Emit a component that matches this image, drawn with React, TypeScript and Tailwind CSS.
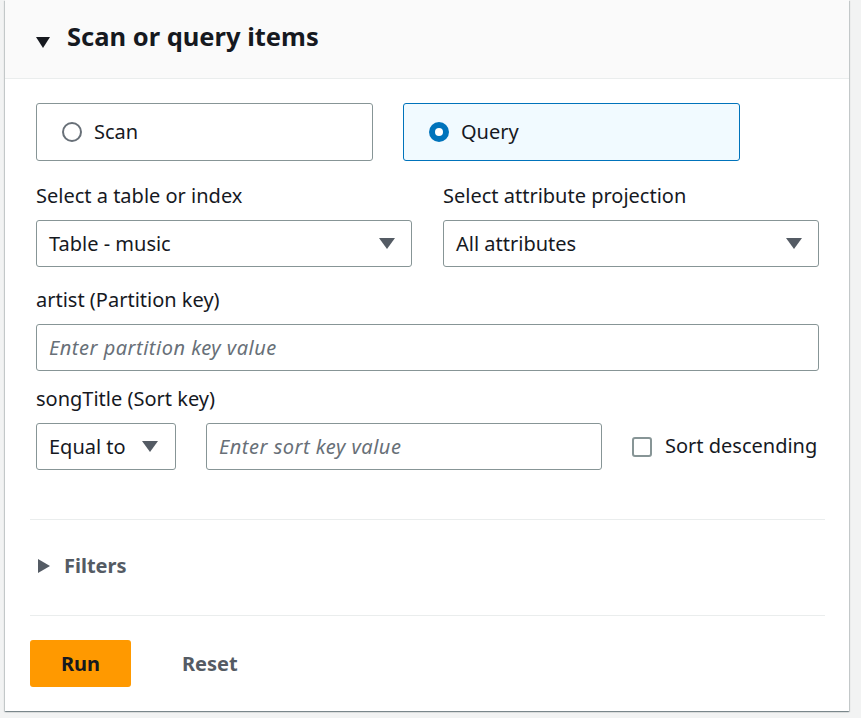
import React, { useState } from 'react';

const Caret = () => <svg width="16" height="12" viewBox="0 0 16 12" className="shrink-0">
    <path d="M0 0 H16 L8 11 Z" fill="#545b64" />
  </svg>;

const SelectBox = ({ value, className = '' }: { value: string; className?: string }) => <div className={`flex items-center justify-between h-[47px] border border-[#879596] rounded-[3px] bg-white pl-[12px] pr-[16px] text-[#16191f] ${className}`}>
    <span>{value}</span>
    <Caret />
  </div>;

// the italic placeholder runs a bit wider in the reference
const inputCls = 'h-[47px] border border-[#879596] rounded-[3px] px-[12px] italic tracking-[0.5px] placeholder:text-[#687078] outline-none';

const App = () => {
  const [mode, setMode] = useState<'scan' | 'query'>('query');
  const [desc, setDesc] = useState(false);
  return <div className="min-h-screen bg-[#f2f3f3] pb-[7px] text-[20px] leading-6 text-[#16191f]" style={{ fontFamily: '"Noto Sans", "Open Sans", sans-serif' }}>
      <div className="ml-[5px] w-[844px] bg-white shadow-[0_1px_1px_0_rgba(0,28,36,0.3),1px_1px_1px_0_rgba(0,28,36,0.15),-1px_1px_1px_0_rgba(0,28,36,0.15)]">
        {/* header */}
        <div className="h-[79px] bg-[#fafafa] border-b border-[#eaeded] flex items-center pl-[31px] pb-[6px]">
          <svg width="14" height="11" viewBox="0 0 14 11" className="mt-[13px] shrink-0">
            <path d="M0 0 H14 L7 11 Z" fill="#16191f" />
          </svg>
          <h2 className="ml-[17px] text-[25.5px] leading-8 font-bold">Scan or query items</h2>
        </div>

        <div className="pl-[25px] pr-[24px] pt-[24px]">
          <div className="px-[6px]">
            {/* mode tiles */}
            <div className="flex gap-[30px]">
              {(['scan', 'query'] as const).map(m => {
              const on = mode === m;
              return <button key={m} onClick={() => setMode(m)} className={`w-[337px] h-[58px] flex items-center pl-[25px] rounded-[3px] border text-left ${on ? 'border-[#0073bb] bg-[#f1faff]' : 'border-[#879596] bg-white'}`}>
                    {on ? <span className="w-[20px] h-[20px] rounded-full bg-[#0073bb] flex items-center justify-center">
                        <span className="w-[8px] h-[8px] rounded-full bg-white" />
                      </span> : <span className="w-[20px] h-[20px] rounded-full border-2 border-[#687078] bg-white" />}
                    <span className="ml-[12px]">{m === 'scan' ? 'Scan' : 'Query'}</span>
                  </button>;
            })}
            </div>

            {/* table + projection */}
            <div className="grid grid-cols-2 gap-[31px] mt-[23px]">
              <div>
                <div className="mb-[12px]">Select a table or index</div>
                <SelectBox value="Table - music" />
              </div>
              <div>
                <div className="mb-[12px]">Select attribute projection</div>
                <SelectBox value="All attributes" />
              </div>
            </div>

            {/* partition key */}
            <div className="mt-[21px] mb-[12px]">artist (Partition key)</div>
            <input type="text" placeholder="Enter partition key value" className={`w-full ${inputCls}`} />

            {/* sort key */}
            <div className="mt-[16px] mb-[12px]">songTitle (Sort key)</div>
            <div className="flex items-center">
              <SelectBox value="Equal to" className="w-[140px] shrink-0 pr-[17px]" />
              <input type="text" placeholder="Enter sort key value" className={`ml-[30px] w-[396px] ${inputCls}`} />
              <label className="ml-[30px] flex items-center cursor-pointer" onClick={() => setDesc(!desc)}>
                <span className={`w-[20px] h-[20px] rounded-[3px] border-2 ${desc ? 'border-[#0073bb] bg-[#0073bb]' : 'border-[#879596] bg-white'}`} />
                <span className="ml-[13px] mb-[2px]">Sort descending</span>
              </label>
            </div>
          </div>

          <div className="mt-[49px] border-t border-[#eaeded]" />

          {/* filters */}
          <div className="pt-[34px] pb-[37px] flex items-center pl-[8px] text-[#545b64] font-bold">
            <svg width="12" height="14" viewBox="0 0 12 14" className="shrink-0">
              <path d="M0 0 L12 7 L0 14 Z" fill="#545b64" />
            </svg>
            <span className="ml-[14px]">Filters</span>
          </div>

          <div className="border-t border-[#eaeded]" />

          {/* actions */}
          <div className="pt-[24px] pb-[24px] flex items-center">
            <button className="w-[101px] h-[47px] rounded-[3px] bg-[#ff9900] font-bold text-[#16191f]">Run</button>
            <button className="ml-[51px] font-bold text-[#545b64]">Reset</button>
          </div>
        </div>
      </div>
    </div>;
};

export default App;
